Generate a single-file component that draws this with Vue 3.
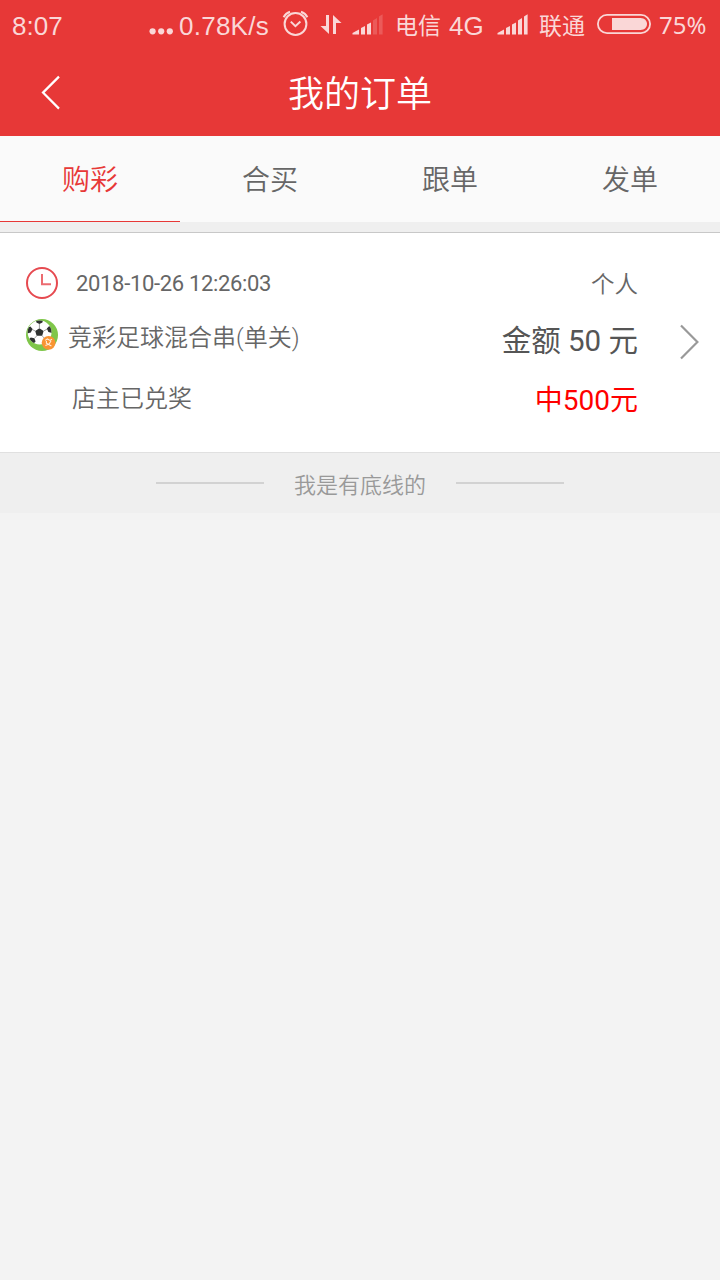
<template>
  <div class="page">
    <div class="status-bar">
      <span class="clock">8:07</span>
      <svg class="dots" viewBox="0 0 25 50">
        <circle cx="3.6" cy="31.3" r="3.1" />
        <circle cx="12.2" cy="31.3" r="3.1" />
        <circle cx="20.8" cy="31.3" r="3.1" />
      </svg>
      <span class="speed">0.78K/s</span>
      <svg class="alarm" viewBox="0 0 28 50">
        <circle cx="13.5" cy="24" r="10.9" />
        <path d="M8.8 21.6 L13.4 26.2 L18.4 21.6" />
        <path d="M1.6 17.2 Q3.6 13.4 8 11.8 M19 11.8 Q23.4 13.4 25.4 17.2" />
      </svg>
      <svg class="transfer" viewBox="0 0 22 50">
        <path d="M6 15 H9 V34 L0.5 26 H6 Z M13 34 V15 L21.5 23 H16 V34 Z" />
      </svg>
      <svg
        v-for="(level, index) in signals"
        :key="index"
        class="signal"
        :class="'signal-' + index"
        viewBox="0 0 32 50"
      >
        <path
          v-for="(bar, i) in bars"
          :key="i"
          :d="bar"
          :class="{ 'off': i >= level }"
        />
      </svg>
      <span class="carrier carrier-first">电信</span>
      <span class="network">4G</span>
      <span class="carrier carrier-second">联通</span>
      <svg class="battery" viewBox="0 0 54 50">
        <rect class="shell" x="0.9" y="14.9" width="52.2" height="18.2" rx="9.1" />
        <path d="M15 18 H43.5 C47.5 18 50 20.8 50 24 C50 27.2 47.5 30 43.5 30 H15 Z" />
      </svg>
      <span class="percent">75%</span>
    </div>

    <div class="header">
      <button class="back-button" @click="goBack">
        <svg viewBox="0 0 20 36">
          <path d="M19 1.6 L3 17.6 L19 33.6" />
        </svg>
      </button>
      <h1 class="title">我的订单</h1>
    </div>

    <div class="tabs">
      <div
        v-for="tab in tabs"
        :key="tab"
        class="tab"
        :class="{ 'active': activeTab === tab }"
        @click="activeTab = tab"
      >
        {{ tab }}
      </div>
    </div>

    <div class="orders">
      <div v-for="order in orders" :key="order.id" class="order">
        <div class="order-left">
          <div class="row date-row">
            <svg class="icon" viewBox="0 0 32 32">
              <circle class="clock-ring" cx="16" cy="16" r="15" />
              <path class="clock-hand" d="M16 7 V17.2 H25" />
            </svg>
            <span class="date">{{ order.date }}</span>
          </div>
          <div class="row game-row">
            <svg class="icon" viewBox="0 0 32 32">
              <defs>
                <clipPath id="ball"><circle cx="13.6" cy="13.5" r="11.9" /></clipPath>
              </defs>
              <circle cx="16" cy="16" r="16" fill="#7fc64a" />
              <circle cx="13.6" cy="13.5" r="11.9" fill="#fff" />
              <g clip-path="url(#ball)">
                <path
                  d="M13.4 9.2 L17.6 12 L16.2 16.8 H10.6 L9.2 12 Z M10 1 H17 L16.4 3.4 L13.4 5 L10.4 3.4 Z M1 9 L4.4 7.6 L6.6 10 L4.8 13.4 L1 14.4 Z M26 8 L23 7.2 L20.8 9.6 L22.4 13 L26 14 Z M4.8 18.4 L8.4 19.2 L9.6 22.6 L7 25 L2 21 Z M22.4 18 L18.8 19.4 L17.8 23 L20 25 L25 21 Z"
                  fill="#2f3231"
                />
                <path
                  d="M13.4 9 V5 M17.6 12 L21 10.2 M16.2 17 L18.8 19.6 M10.6 17 L8.4 19.4 M9.2 12 L6 10.4"
                  stroke="#888"
                  stroke-width="0.8"
                />
              </g>
              <circle cx="22.6" cy="23.8" r="6.9" fill="#f99432" />
              <path
                d="M19.2 21.4 L21.4 20 L24 21.4 L26 20.2 M20.4 22 L20.4 24.2 L25.4 27 M25 22 L23 25 L19.4 26.4"
                fill="none"
                stroke="#ffeeda"
                stroke-width="1.1"
              />
            </svg>
            <span class="game">{{ order.game }}</span>
          </div>
          <div class="row state">{{ order.state }}</div>
        </div>
        <div class="order-right">
          <div class="type">{{ order.type }}</div>
          <div class="amount">金额 {{ order.amount }} 元</div>
          <div class="prize">中{{ order.prize }}元</div>
        </div>
        <svg class="arrow" viewBox="0 0 20 36">
          <path d="M1 1.4 L17.4 18 L1 34.6" />
        </svg>
      </div>
    </div>

    <div class="bottom-line">
      <span class="line"></span>
      <span class="bottom-text">我是有底线的</span>
      <span class="line"></span>
    </div>
  </div>
</template>

<script setup>
import { ref } from 'vue'

const tabs = ['购彩', '合买', '跟单', '发单']
const activeTab = ref('购彩')

// number of lit bars for each SIM card
const signals = [3, 5]
const bars = [
  'M0.5 34.5 V33 L7 29.5 V34.5 Z',
  'M9 34.5 V28 L13 26 V34.5 Z',
  'M15 34.5 V24.6 L19 22.4 V34.5 Z',
  'M21 34.5 V20.4 L25 18 V34.5 Z',
  'M27 34.5 V16.4 L30.6 14.2 V34.5 Z'
]

const orders = ref([
  {
    id: 1,
    date: '2018-10-26 12:26:03',
    game: '竞彩足球混合串(单关)',
    state: '店主已兑奖',
    type: '个人',
    amount: 50,
    prize: 500
  }
])

function goBack() {
  window.history.back()
}
</script>

<style>
body {
  margin: 0;
  background: #f3f3f3;
}
</style>

<style scoped>
.page {
  --primary: #e73837;
  --status: #fad7d7;
  --text: #666;

  width: 720px;
  min-height: 1280px;
  background: #f3f3f3;
  color: var(--text);
  font-family: Roboto, 'Noto Sans CJK SC', sans-serif;
}

.status-bar {
  display: flex;
  height: 50px;
  padding-left: 12px;
  background: var(--primary);
  color: var(--status);
  font-family: 'Liberation Sans', 'Noto Sans CJK SC', sans-serif;
  font-size: 26px;
  line-height: 52px;
  white-space: nowrap;
}

.status-bar > * {
  flex: none;
}

.status-bar svg {
  height: 50px;
  fill: var(--status);
}

.clock {
  width: 137px;
}

.dots {
  width: 25px;
  margin-right: 5px;
}

.speed {
  width: 103px;
  letter-spacing: 0.25px;
}

.status-bar .alarm {
  width: 28px;
  fill: none;
  stroke: var(--status);
  stroke-width: 2;
}

.transfer {
  width: 22px;
  margin-left: 10px;
}

.signal {
  width: 32px;
}

.signal-0 {
  order: 1;
  margin-left: 10px;
}

.signal .off {
  opacity: 0.22;
}

.carrier {
  width: 46px;
  font-size: 23px;
}

.carrier-first {
  order: 2;
  margin-left: 11px;
}

.network {
  order: 3;
  width: 36px;
  margin-left: 8px;
}

.signal-1 {
  order: 4;
  margin-left: 12px;
}

.carrier-second {
  order: 5;
  margin-left: 10px;
}

.battery {
  order: 6;
  width: 54px;
  margin-left: 12px;
}

.battery .shell {
  fill: none;
  stroke: var(--status);
  stroke-width: 1.8;
}

.percent {
  order: 7;
  margin-left: 8px;
  font-family: 'Noto Sans', sans-serif;
  font-size: 24px;
  line-height: 49px;
}

.header {
  display: grid;
  grid-template-columns: 100px 1fr 100px;
  grid-template-rows: 86px;
  background: var(--primary);
  color: #fff;
}

.back-button {
  display: flex;
  align-items: center;
  padding: 0 0 0 40px;
  border: none;
  background: none;
  cursor: pointer;
}

.back-button svg {
  width: 20px;
  height: 36px;
  fill: none;
  stroke: #fff;
  stroke-width: 2.2;
}

.title {
  margin: 0;
  font-size: 36px;
  font-weight: 350;
  line-height: 90px;
  text-align: center;
}

.tabs {
  display: flex;
  height: 86px;
  background: #fafafa;
}

.tab {
  flex: 1;
  box-sizing: border-box;
  height: 86px;
  font-size: 28px;
  font-weight: 350;
  line-height: 90px;
  text-align: center;
  cursor: pointer;
}

.tab.active {
  border-bottom: 1px solid var(--primary);
  color: var(--primary);
}

.orders {
  padding-top: 10px;
  background: #efefef;
}

.order {
  display: flex;
  box-sizing: border-box;
  height: 221px;
  padding: 24px 20px 0 26px;
  border-top: 1px solid #c8c8c8;
  border-bottom: 1px solid #e0e0e0;
  background: #fff;
}

.order-left {
  flex: 1;
}

.row {
  display: flex;
  align-items: center;
  height: 52px;
}

.icon {
  width: 32px;
  height: 32px;
}

.clock-ring {
  fill: none;
  stroke: #e64a50;
  stroke-width: 2;
}

.clock-hand {
  fill: none;
  stroke: #ec6b70;
  stroke-width: 2;
}

.date {
  margin-left: 18px;
  font-size: 22px;
  letter-spacing: -0.33px;
}

.game {
  margin-left: 10px;
  font-size: 24px;
  font-weight: 350;
}

.state {
  height: 70px;
  padding-left: 46px;
  font-size: 24px;
  font-weight: 350;
}

.order-right {
  text-align: right;
}

.type {
  height: 52px;
  font-size: 23.5px;
  font-weight: 350;
  line-height: 57px;
}

.amount {
  height: 60px;
  color: #555;
  font-size: 29.5px;
  line-height: 64px;
}

.prize {
  height: 60px;
  color: #f00;
  font-size: 28px;
  line-height: 64px;
}

.arrow {
  width: 20px;
  height: 36px;
  margin: 67px 0 0 42px;
  fill: none;
  stroke: #999;
  stroke-width: 2.2;
}

.bottom-line {
  display: flex;
  align-items: center;
  justify-content: center;
  gap: 30px;
  height: 60px;
  background: #efefef;
  color: #999;
}

.line {
  width: 108px;
  height: 2px;
  background: #d2d2d2;
}

.bottom-text {
  font-size: 22px;
  font-weight: 350;
}
</style>
